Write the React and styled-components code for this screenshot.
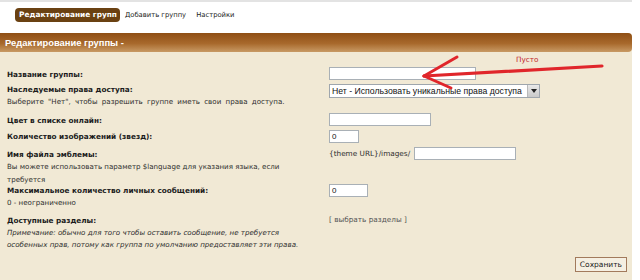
import React from "react";
import styled, { createGlobalStyle } from "styled-components";

const Global = createGlobalStyle`
  html, body { margin: 0; padding: 0; background: #fff; }
  body { width: 640px; height: 280px; overflow: hidden; font-family: "DejaVu Sans", Verdana, sans-serif; }
`;

const Page = styled.div`
  width: 632px;
  height: 280px;
  position: relative;
`;

const Nav = styled.div`
  border-top: 2px solid #e3e3e3;
  height: 33px;
  box-sizing: border-box;
  padding: 6px 0 0 15px;
  display: flex;
  align-items: flex-start;
`;

const Tab = styled.a`
  display: block;
  height: 14px;
  line-height: 14px;
  padding: 0 3px 0 4px;
  margin-right: ${(p) => (p.$active ? "1px" : "3px")};
  border-radius: 4px;
  font-size: ${(p) => (p.$active ? "7.4px" : "6.8px")};
  font-weight: ${(p) => (p.$active ? "bold" : "normal")};
  color: ${(p) => (p.$active ? "#fff" : "#1a1a1a")};
  background: ${(p) => (p.$active ? "#6a4112" : "transparent")};
  white-space: nowrap;
`;

const Panel = styled.div`
  position: relative;
  background: #f1e9d5;
  height: 247px;
  border-radius: 0 4px 0 0;
`;

const Header = styled.div`
  height: 19px;
  line-height: 19px;
  padding-left: 5px;
  border-radius: 0 4px 4px 0;
  background: linear-gradient(to bottom, #8f4f14 0%, #a8692c 55%, #c89a64 100%);
  color: #fff;
  font-family: "Liberation Sans", Arial, sans-serif;
  font-weight: bold;
  font-size: 9.4px;
`;

const Form = styled.div`
  padding: 15px 0 0 7px;
`;

const Row = styled.div`
  display: grid;
  grid-template-columns: 322px 1fr;
  align-items: start;
  height: ${(p) => p.$h}px;
`;

const LabelCol = styled.div`
  padding-top: ${(p) => p.$off ?? 2}px;
`;

const Label = styled.div`
  font-size: 7.3px;
  font-weight: bold;
  line-height: 12px;
  color: #1b1b1b;
  white-space: nowrap;
`;

const Desc = styled.div`
  font-size: 7.1px;
  line-height: ${(p) => p.$lh || 12}px;
  color: #2e2e2e;
  font-style: ${(p) => (p.$italic ? "italic" : "normal")};
  word-spacing: ${(p) => p.$ws || 0}px;
  white-space: nowrap;
`;

const FieldCol = styled.div`
  padding-top: ${(p) => p.$off ?? 0}px;
  display: flex;
  align-items: center;
  gap: 4px;
`;

const Input = styled.div`
  width: ${(p) => p.$w}px;
  height: 13px;
  box-sizing: border-box;
  border: 1px solid #a9b0b6;
  background: #fff;
  font-family: "Liberation Sans", Arial, sans-serif;
  font-size: 8px;
  line-height: 11px;
  padding-left: 2px;
  color: #111;
`;

const Select = styled.div`
  width: 211px;
  height: 14px;
  box-sizing: border-box;
  border: 1px solid #9fa6ad;
  background: #fff;
  display: flex;
  align-items: stretch;
`;

const SelectText = styled.div`
  flex: 1;
  font-family: "Liberation Sans", Arial, sans-serif;
  font-size: 8.7px;
  line-height: 12px;
  padding-left: 2px;
  color: #111;
  white-space: nowrap;
  overflow: hidden;
`;

const SelectBtn = styled.div`
  width: 11px;
  background: linear-gradient(#e9e9e9, #c9c9c9);
  border-left: 1px solid #b9b9b9;
  display: flex;
  align-items: center;
  justify-content: center;
`;

const Plain = styled.span`
  font-size: 7.3px;
  color: #2e2e2e;
  white-space: nowrap;
`;

const LinkText = styled.span`
  font-size: 7.3px;
  line-height: 12px;
  color: #555;
  white-space: nowrap;
`;

const Footer = styled.div`
  display: flex;
  justify-content: flex-end;
  padding-right: 5px;
  margin-top: -1px;
`;

const Button = styled.div`
  height: 15px;
  box-sizing: border-box;
  border: 1px solid #a27a5c;
  background: #f5efe2;
  padding: 0 4px;
  font-size: 7.5px;
  line-height: 13px;
  color: #1b1b1b;
`;

const Note = styled.div`
  position: absolute;
  left: 516px;
  top: 22px;
  font-size: 7.3px;
  color: #c2282c;
`;

const Arrow = styled.svg`
  position: absolute;
  left: 0;
  top: 0;
  pointer-events: none;
`;

export default function App() {
  return (
    <>
      <Global />
      <Page>
        <Nav>
          <Tab $active>Редактирование групп</Tab>
          <Tab>Добавить группу</Tab>
          <Tab>Настройки</Tab>
        </Nav>
        <Panel>
          <Header>Редактирование группы -</Header>
          <Form>
            <Row $h={16}>
              <LabelCol><Label>Название группы:</Label></LabelCol>
              <FieldCol><Input $w={147} /></FieldCol>
            </Row>
            <Row $h={30}>
              <LabelCol $off={1}>
                <Label>Наследуемые права доступа:</Label>
                <Desc $ws={2}>Выберите "Нет", чтобы разрешить группе иметь свои права доступа.</Desc>
              </LabelCol>
              <FieldCol $off={1}>
                <Select>
                  <SelectText>Нет - Использовать уникальные права доступа</SelectText>
                  <SelectBtn>
                    <svg width="6" height="4" viewBox="0 0 6 4"><path d="M0 0h6L3 4z" fill="#222" /></svg>
                  </SelectBtn>
                </Select>
              </FieldCol>
            </Row>
            <Row $h={16}>
              <LabelCol><Label>Цвет в списке онлайн:</Label></LabelCol>
              <FieldCol><Input $w={102} /></FieldCol>
            </Row>
            <Row $h={18}>
              <LabelCol><Label>Количество изображений (звезд):</Label></LabelCol>
              <FieldCol $off={1}><Input $w={30}>0</Input></FieldCol>
            </Row>
            <Row $h={37}>
              <LabelCol>
                <Label>Имя файла эмблемы:</Label>
                <Desc $lh={12.5}>Вы можете использовать параметр $language для указания языка, если</Desc>
                <Desc $lh={12.5}>требуется</Desc>
              </LabelCol>
              <FieldCol>
                <Plain>{"{theme URL}/images/"}</Plain>
                <Input $w={102} />
              </FieldCol>
            </Row>
            <Row $h={30}>
              <LabelCol $off={1}>
                <Label>Максимальное количество личных сообщений:</Label>
                <Desc>0 - неограниченно</Desc>
              </LabelCol>
              <FieldCol><Input $w={39}>0</Input></FieldCol>
            </Row>
            <Row $h={44}>
              <LabelCol $off={1}>
                <Label>Доступные разделы:</Label>
                <Desc $italic>Примечание: обычно для того чтобы оставить сообщение, не требуется</Desc>
                <Desc $italic>особенных прав, потому как группа по умолчанию предоставляет эти права.</Desc>
              </LabelCol>
              <FieldCol><LinkText>[ выбрать разделы ]</LinkText></FieldCol>
            </Row>
            <Footer><Button>Сохранить</Button></Footer>
          </Form>
          <Note>Пусто</Note>
          <Arrow width="632" height="80" viewBox="0 0 632 80">
            <g stroke="#e0262b" strokeLinecap="round" fill="none">
              <path d="M602 33 L424 43" strokeWidth="3.2" />
              <path d="M424 43 L457 24" strokeWidth="3" />
              <path d="M424 43 L451 55" strokeWidth="3" />
            </g>
          </Arrow>
        </Panel>
      </Page>
    </>
  );
}
